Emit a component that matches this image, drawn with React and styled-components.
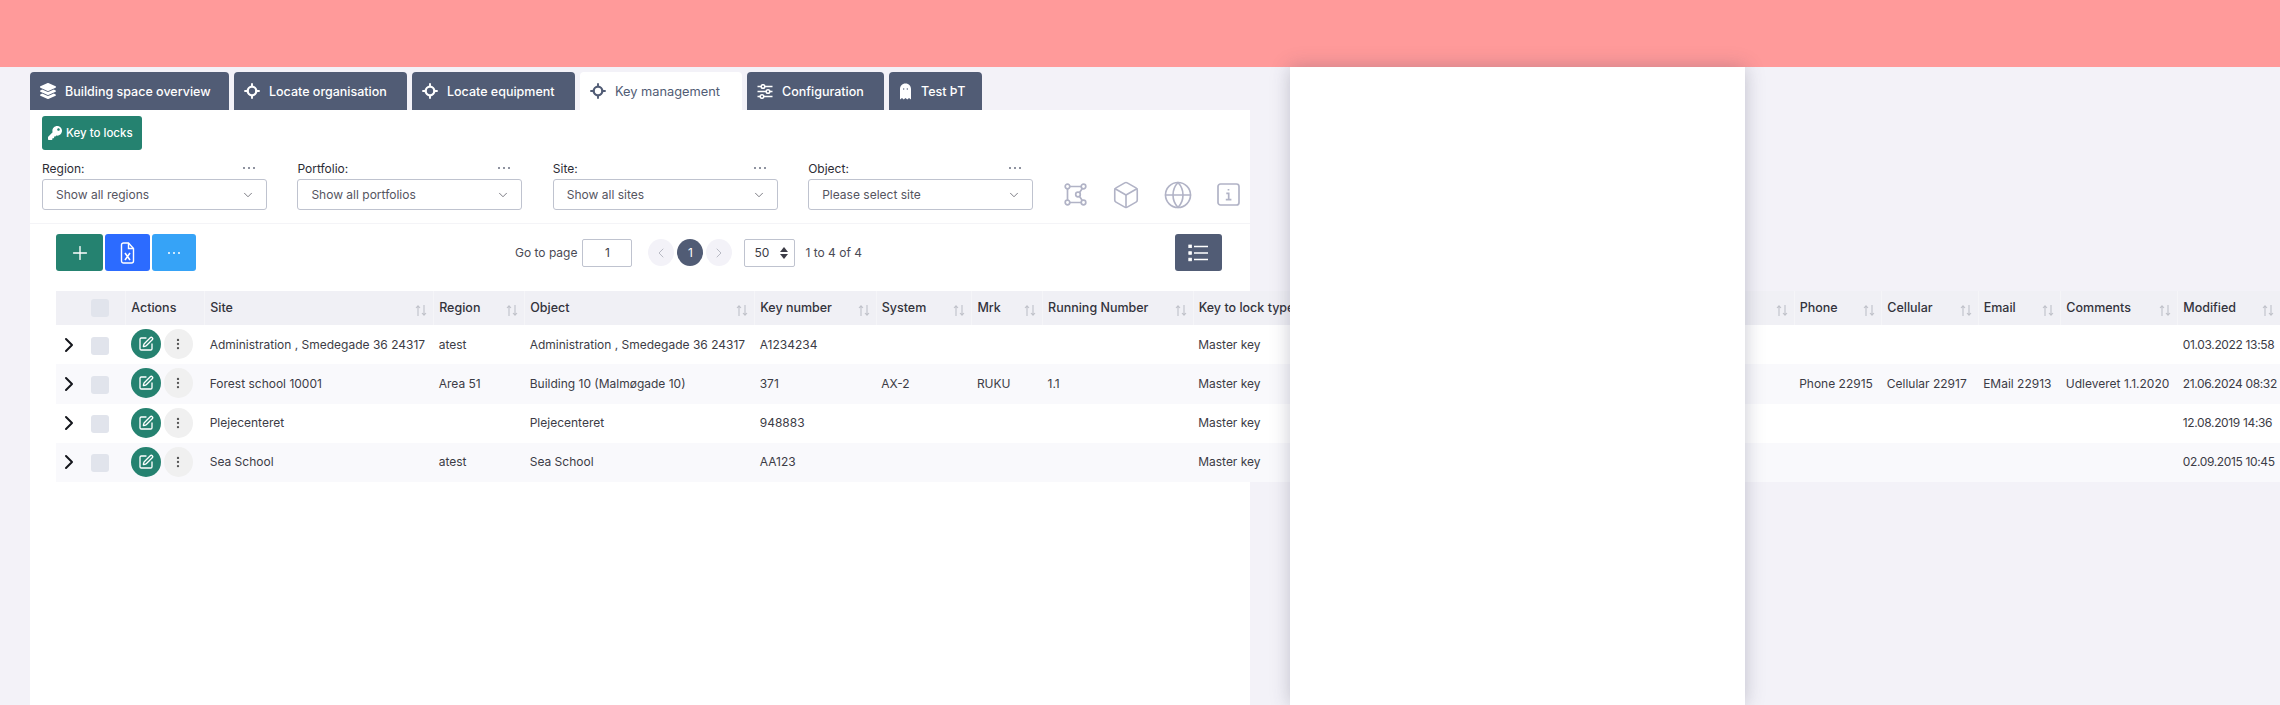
import React from 'react';
import styled, { createGlobalStyle } from 'styled-components';
import { FaKey, FaLayerGroup } from 'react-icons/fa';
import {
	Box,
	ChevronDown,
	ChevronLeft,
	ChevronRight,
	EllipsisVertical,
	Globe,
	Plus,
	SquarePen,
} from 'lucide-react';

const tabs = [
	{ label: 'Building space overview', width: 199, icon: 'layers' },
	{ label: 'Locate organisation', width: 173, icon: 'target' },
	{ label: 'Locate equipment', width: 163, icon: 'target' },
	{ label: 'Key management', width: 162, icon: 'target', active: true },
	{ label: 'Configuration', width: 137, icon: 'sliders' },
	{ label: 'Test ÞT', width: 93, icon: 'ghost' },
];

const filters = [
	{ label: 'Region:', value: 'Show all regions' },
	{ label: 'Portfolio:', value: 'Show all portfolios' },
	{ label: 'Site:', value: 'Show all sites' },
	{ label: 'Object:', value: 'Please select site' },
];

const columns = [
	{ key: 'expand', width: 27 },
	{ key: 'check', width: 42.7 },
	{ key: 'actions', width: 79, label: 'Actions' },
	{ key: 'site', width: 229, label: 'Site', sort: true },
	{ key: 'region', width: 91, label: 'Region', sort: true },
	{ key: 'object', width: 230, label: 'Object', sort: true },
	{ key: 'keyNumber', width: 121.5, label: 'Key number', sort: true },
	{ key: 'system', width: 95.7, label: 'System', sort: true },
	{ key: 'mrk', width: 70.7, label: 'Mrk', sort: true },
	{ key: 'running', width: 150.6, label: 'Running Number', sort: true },
	{ key: 'type', width: 147, label: 'Key to lock type', sort: true },
	{ key: 'hidden', width: 335 },
	{ key: 'address', width: 119, label: 'Address', sort: true, indent: 12 },
	{ key: 'phone', width: 87.6, label: 'Phone', sort: true },
	{ key: 'cellular', width: 96.4, label: 'Cellular', sort: true },
	{ key: 'email', width: 82.7, label: 'Email', sort: true },
	{ key: 'comments', width: 116.9, label: 'Comments', sort: true },
	{ key: 'modified', width: 102.4, label: 'Modified', sort: true, tight: true },
];

const rows = [
	{
		site: 'Administration , Smedegade 36 24317',
		region: 'atest',
		object: 'Administration , Smedegade 36 24317',
		keyNumber: 'A1234234',
		type: 'Master key',
		modified: '01.03.2022 13:58',
	},
	{
		site: 'Forest school 10001',
		region: 'Area 51',
		object: 'Building 10 (Malmøgade 10)',
		keyNumber: '371',
		system: 'AX-2',
		mrk: 'RUKU',
		running: '1.1',
		type: 'Master key',
		phone: 'Phone 22915',
		cellular: 'Cellular 22917',
		email: 'EMail 22913',
		comments: 'Udleveret 1.1.2020',
		modified: '21.06.2024 08:32',
	},
	{
		site: 'Plejecenteret',
		object: 'Plejecenteret',
		keyNumber: '948883',
		type: 'Master key',
		modified: '12.08.2019 14:36',
	},
	{
		site: 'Sea School',
		region: 'atest',
		object: 'Sea School',
		keyNumber: 'AA123',
		type: 'Master key',
		modified: '02.09.2015 10:45',
	},
];

function TargetIcon() {
	return (
		<svg width='16' height='16' viewBox='0 0 16 16' fill='none' stroke='currentColor'>
			<circle cx='8' cy='8' r='4.3' strokeWidth='2.3' />
			<path d='M8 0.3v3M8 12.7v3M0.3 8h3M12.7 8h3' strokeWidth='1.9' />
		</svg>
	);
}

function SlidersIcon() {
	return (
		<svg width='16' height='15' viewBox='0 0 16 15' fill='none' stroke='currentColor' strokeWidth='1.5'>
			<path d='M0.5 2.5h3.5M8 2.5h7.5M0.5 7.5h8.5M13 7.5h2.5M0.5 12.5h2.5M7 12.5h8.5' />
			<circle cx='6' cy='2.5' r='1.8' />
			<circle cx='11' cy='7.5' r='1.8' />
			<circle cx='5' cy='12.5' r='1.8' />
		</svg>
	);
}

function GhostIcon() {
	return (
		<svg width='13' height='17' viewBox='0 0 13 17'>
			<path
				fill='currentColor'
				d='M6.5 0.5C3 0.5 1 3 1 6v10.5l2-1.5 1.7 1.5 1.8-1.5 1.8 1.5 1.7-1.5 2 1.5V6c0-3-2-5.5-5.5-5.5z'
			/>
			<circle cx='4.7' cy='6' r='0.7' fill='#515c75' />
			<circle cx='8.3' cy='6' r='0.7' fill='#515c75' />
		</svg>
	);
}

function SortIcon() {
	return (
		<svg width='12' height='13' viewBox='0 0 12 13' fill='none' stroke='#bfc1c9' strokeWidth='1.1'>
			<path d='M3 12V2M1 4l2-2.2L5 4' />
			<path d='M9 1v10M7 9l2 2.2L11 9' />
		</svg>
	);
}

function ExcelIcon() {
	return (
		<svg width='15' height='22' viewBox='0 0 15 22' fill='none' stroke='#fff' strokeWidth='1.4'>
			<path d='M1.5 3a2 2 0 0 1 2-2h5l5 5.5V19a2 2 0 0 1-2 2h-8a2 2 0 0 1-2-2z' />
			<path d='M8.5 1v5.5h5' />
			<path d='M5 11l5 7M10 11l-5 7' strokeWidth='1.6' />
		</svg>
	);
}

function NodesIcon() {
	return (
		<svg width='23' height='23' viewBox='0 0 23 23' fill='none' stroke='#b1b3c6' strokeWidth='1.7'>
			<circle cx='3.5' cy='3.5' r='2.3' />
			<circle cx='19.5' cy='3.5' r='2.3' />
			<circle cx='3.5' cy='19.5' r='2.3' />
			<circle cx='19.5' cy='19.5' r='2.3' />
			<circle cx='14' cy='11.5' r='2.3' />
			<path d='M5.8 3.5h11.4M5.8 19.5h11.4M3.5 5.8v11.4M18.3 5.5l-2.9 4.2M18.3 17.5l-2.9-4.2' />
		</svg>
	);
}

function InfoIcon() {
	return (
		<svg width='23' height='23' viewBox='0 0 23 23' fill='none' stroke='#b1b3c6' strokeWidth='1.7'>
			<rect x='1' y='1' width='21' height='21' rx='2.5' />
			<path d='M11.5 6v1.6M9.3 10.3h2.4v6M8.8 16.6h5.6' />
		</svg>
	);
}

function ListIcon() {
	return (
		<svg width='20' height='18' viewBox='0 0 20 18' fill='none' stroke='#fff' strokeWidth='1.6'>
			<path d='M6 2.5h14M6 9h14M6 15.5h14' />
			<rect x='0.8' y='1' width='2.6' height='2.6' fill='#fff' strokeWidth='0.8' />
			<rect x='0.8' y='7.7' width='2.6' height='2.6' fill='#fff' strokeWidth='0.8' />
			<rect x='0.8' y='14.2' width='2.6' height='2.6' fill='#fff' strokeWidth='0.8' />
		</svg>
	);
}

function TabIcon({ name }) {
	if (name === 'layers') return <FaLayerGroup size={16} />;
	if (name === 'sliders') return <SlidersIcon />;
	if (name === 'ghost') return <GhostIcon />;
	return <TargetIcon />;
}

function App() {
	return (
		<Page>
			<GlobalStyle />
			<TopBar />
			<Main>
				<TabBar>
					{tabs.map((tab) => (
						<Tab key={tab.label} $width={tab.width} $active={tab.active}>
							<TabIcon name={tab.icon} />
							{tab.label}
						</Tab>
					))}
				</TabBar>
				<Panel>
					<KeyButton>
						<FaKey size={14} />
						Key to locks
					</KeyButton>
					<FilterRow>
						{filters.map((filter) => (
							<FilterGroup key={filter.label}>
								<FilterHead>
									{filter.label}
									<Dots>
										<i />
										<i />
										<i />
									</Dots>
								</FilterHead>
								<SelectBox>
									{filter.value}
									<ChevronDown size={14} strokeWidth={1.3} />
								</SelectBox>
							</FilterGroup>
						))}
						<ViewIcons>
							<NodesIcon />
							<Box size={30} color='#b1b3c6' strokeWidth={1.3} />
							<Globe size={30} color='#b1b3c6' strokeWidth={1.3} />
							<InfoIcon />
						</ViewIcons>
					</FilterRow>
					<Divider />
					<Toolbar>
						<ButtonGroup>
							<ToolButton $bg='#258270' $width={47}>
								<Plus size={22} strokeWidth={1.5} />
							</ToolButton>
							<ToolButton $bg='#2c6bff' $width={45}>
								<ExcelIcon />
							</ToolButton>
							<ToolButton $bg='#36a3f7' $width={44}>
								<Dots $light>
									<i />
									<i />
									<i />
								</Dots>
							</ToolButton>
						</ButtonGroup>
						<Pager>
							<PagerText>Go to page</PagerText>
							<PageInput readOnly value='1' />
							<PagerButtons>
								<PageButton>
									<ChevronLeft size={16} strokeWidth={1.2} />
								</PageButton>
								<PageButton $current>1</PageButton>
								<PageButton>
									<ChevronRight size={16} strokeWidth={1.2} />
								</PageButton>
							</PagerButtons>
							<PageSize>
								50
								<Carets />
							</PageSize>
							<PagerText>1 to 4 of 4</PagerText>
						</Pager>
						<ToolButton $bg='#515c75' $width={46.5}>
							<ListIcon />
						</ToolButton>
					</Toolbar>
					<Table>
						<colgroup>
							{columns.map((col) => (
								<col key={col.key} style={{ width: col.width }} />
							))}
						</colgroup>
						<thead>
							<tr>
								{columns.map((col) => (
									<HeadCell key={col.key}>
										{col.key === 'check' && <Check />}
										{col.label && (
											<HeadInner $indent={col.indent}>
												{col.label}
												{col.sort && (
													<SortSlot>
														<SortIcon />
													</SortSlot>
												)}
											</HeadInner>
										)}
									</HeadCell>
								))}
							</tr>
						</thead>
						<tbody>
							{rows.map((row) => (
								<Row key={row.site}>
									{columns.map((col) => {
										if (col.key === 'expand') {
											return (
												<ExpandCell key={col.key}>
													<ChevronRight size={24} color='#14161c' strokeWidth={2} />
												</ExpandCell>
											);
										}
										if (col.key === 'check') {
											return (
												<Cell key={col.key}>
													<RowCheck />
												</Cell>
											);
										}
										if (col.key === 'actions') {
											return (
												<Cell key={col.key}>
													<ActionGroup>
														<RoundButton $edit>
															<SquarePen size={16} color='#fff' strokeWidth={2} />
														</RoundButton>
														<RoundButton>
															<EllipsisVertical size={14} color='#555' strokeWidth={2} />
														</RoundButton>
													</ActionGroup>
												</Cell>
											);
										}
										return (
											<Cell key={col.key} $tight={col.tight}>
												{row[col.key]}
											</Cell>
										);
									})}
								</Row>
							))}
						</tbody>
					</Table>
				</Panel>
			</Main>
			<Drawer />
		</Page>
	);
}

export default App;

const GlobalStyle = createGlobalStyle`
	html, body {
		margin: 0;
		height: 100%;
		overflow: hidden;
		background: #f3f2f8;
	}
	body {
		font-family: Inter, 'Open Sans', sans-serif;
		font-size: 12px;
		color: #3c3c46;
	}
`;

const Page = styled.div`
	position: relative;
	height: 100vh;
	display: flex;
	flex-direction: column;
	overflow: hidden;
`;

const TopBar = styled.header`
	flex: 0 0 67px;
	background: #ff9a9a;
`;

const Main = styled.main`
	flex: 1;
	display: flex;
	flex-direction: column;
	padding: 5px 0 0 30px;
	min-height: 0;
`;

const TabBar = styled.nav`
	display: flex;
	gap: 5px;
	height: 38px;
`;

const Tab = styled.div`
	width: ${(p) => p.$width}px;
	display: flex;
	align-items: center;
	gap: 9px;
	padding: 0 0 0 10px;
	box-sizing: border-box;
	border-radius: 4px 4px 0 0;
	font-size: ${(p) => (p.$active ? 12.8 : 12.5)}px;
	font-weight: ${(p) => (p.$active ? 400 : 500)};
	white-space: nowrap;
	background: ${(p) => (p.$active ? '#fff' : '#515c75')};
	color: ${(p) => (p.$active ? '#515c75' : '#fff')};
	svg {
		flex: none;
	}
`;

const Panel = styled.section`
	flex: 1;
	width: 1220px;
	background: #fff;
	padding-top: 6px;
	display: flex;
	flex-direction: column;
	align-items: flex-start;
`;

const KeyButton = styled.button`
	width: 100px;
	height: 34px;
	margin-left: 12px;
	padding: 0 0 0 6px;
	display: flex;
	align-items: center;
	gap: 4px;
	border: 0;
	border-radius: 3px;
	background: #258270;
	color: #fff;
	font: 500 11.5px Inter, sans-serif;
`;

const FilterRow = styled.div`
	display: flex;
	gap: 30.4px;
	margin: 9px 0 0 12px;
`;

const FilterGroup = styled.div`
	width: 225px;
`;

const FilterHead = styled.div`
	height: 18px;
	margin-bottom: 2px;
	display: flex;
	align-items: center;
	justify-content: space-between;
	padding-right: 12px;
	font-size: 12px;
	font-weight: 400;
	color: #2c2c35;
`;

const Dots = styled.span`
	display: inline-flex;
	gap: 3px;
	i {
		width: 2px;
		height: 2px;
		border-radius: 50%;
		background: ${(p) => (p.$light ? '#fff' : '#6a6f80')};
	}
`;

const SelectBox = styled.div`
	height: 31px;
	box-sizing: border-box;
	display: flex;
	align-items: center;
	justify-content: space-between;
	padding: 0 11px 0 13px;
	border: 1px solid #bfc3cf;
	border-radius: 3px;
	font-size: 12px;
	color: #55555f;
`;

const ViewIcons = styled.div`
	display: flex;
	align-items: center;
	gap: 24px;
	height: 31px;
	margin-top: 20px;
	svg:nth-child(3) {
		margin-left: -2px;
	}
`;

const Divider = styled.hr`
	width: 100%;
	height: 1px;
	margin: 13px 0 0;
	border: 0;
	background: #f4f4f7;
`;

const Toolbar = styled.div`
	width: 1165.5px;
	margin: 10px 0 0 26px;
	display: flex;
	align-items: center;
`;

const ButtonGroup = styled.div`
	display: flex;
	gap: 2px;
`;

const ToolButton = styled.button`
	width: ${(p) => p.$width}px;
	height: 37px;
	padding: 0;
	display: flex;
	align-items: center;
	justify-content: center;
	border: 0;
	border-radius: 3px;
	background: ${(p) => p.$bg};
	color: #fff;
`;

const Pager = styled.div`
	display: flex;
	align-items: center;
	margin: 0 auto 0 319px;
`;

const PagerText = styled.span`
	font-size: 12px;
	color: #4a4a55;
`;

const PageInput = styled.input`
	width: 50px;
	height: 28px;
	box-sizing: border-box;
	margin-left: 5px;
	border: 1px solid #bfc3cf;
	border-radius: 2px;
	outline: 0;
	padding: 0;
	text-align: center;
	font: 12px Inter, sans-serif;
	color: #3c3c46;
`;

const PagerButtons = styled.div`
	display: flex;
	gap: 3px;
	margin: 0 12px 0 16px;
`;

const PageButton = styled.span`
	width: 26px;
	height: 27px;
	display: flex;
	align-items: center;
	justify-content: center;
	border-radius: 50%;
	background: ${(p) => (p.$current ? '#515c75' : '#f3f2f8')};
	color: ${(p) => (p.$current ? '#fff' : '#a8abb6')};
	font-size: 12px;
`;

const PageSize = styled.div`
	width: 51px;
	height: 28px;
	box-sizing: border-box;
	margin-right: 10px;
	padding: 0 6px 0 9px;
	display: flex;
	align-items: center;
	justify-content: space-between;
	border: 1px solid #bfc3cf;
	border-radius: 2px;
	font-size: 12px;
`;

const Carets = styled.i`
	width: 8px;
	display: flex;
	flex-direction: column;
	gap: 2px;
	&:before,
	&:after {
		content: '';
		width: 0;
		height: 0;
		border-left: 4px solid transparent;
		border-right: 4px solid transparent;
	}
	&:before {
		border-bottom: 5px solid #3c3c46;
	}
	&:after {
		border-top: 5px solid #3c3c46;
	}
`;

const Table = styled.table`
	width: 2224px;
	margin: 20px 0 0 26px;
	table-layout: fixed;
	border-collapse: collapse;
	flex: none;
`;

const HeadCell = styled.th`
	height: 34px;
	padding: 0;
	background: #f0f0f5;
	border-right: 1px solid #f5f5f8;
	font-size: 12.5px;
	font-weight: 500;
	text-align: left;
	color: #33333c;
	white-space: nowrap;
	overflow: hidden;
	&:first-child {
		border-right: 0;
	}
	&:nth-child(2) {
		padding-left: 7.5px;
	}
`;

const HeadInner = styled.div`
	display: flex;
	align-items: center;
	justify-content: space-between;
	padding: 0 6px 2px ${(p) => 5 + (p.$indent || 0)}px;
`;

const SortSlot = styled.span`
	display: flex;
	margin-top: 6px;
`;

const Row = styled.tr`
	height: 39.25px;
	background: #fff;
	&:nth-child(even) {
		background: #f9f9fc;
	}
`;

const Cell = styled.td`
	padding: 0 0 1px 5px;
	font-size: 12px;
	color: #3c3c46;
	white-space: nowrap;
	overflow: hidden;
	letter-spacing: ${(p) => (p.$tight ? '-0.35px' : 'normal')};
	&:nth-child(2) {
		padding-left: 7.5px;
	}
`;

const ExpandCell = styled.td`
	padding: 0 0 0 1px;
	svg {
		display: block;
	}
`;

const Check = styled.div`
	width: 18px;
	height: 18px;
	border-radius: 3px;
	background: #e1e4ec;
`;

const RowCheck = styled(Check)`
	margin-top: 3px;
`;

const ActionGroup = styled.div`
	display: flex;
	gap: 3px;
`;

const RoundButton = styled.span`
	width: ${(p) => (p.$edit ? 30 : 29)}px;
	height: 30px;
	display: flex;
	align-items: center;
	justify-content: center;
	border-radius: 50%;
	background: ${(p) => (p.$edit ? '#258270' : '#f0f0f0')};
`;

const Drawer = styled.aside`
	position: absolute;
	top: 67px;
	bottom: 0;
	left: 1290px;
	width: 455px;
	background: #fff;
	box-shadow: 0 0 18px rgba(60, 60, 90, 0.28);
`;
